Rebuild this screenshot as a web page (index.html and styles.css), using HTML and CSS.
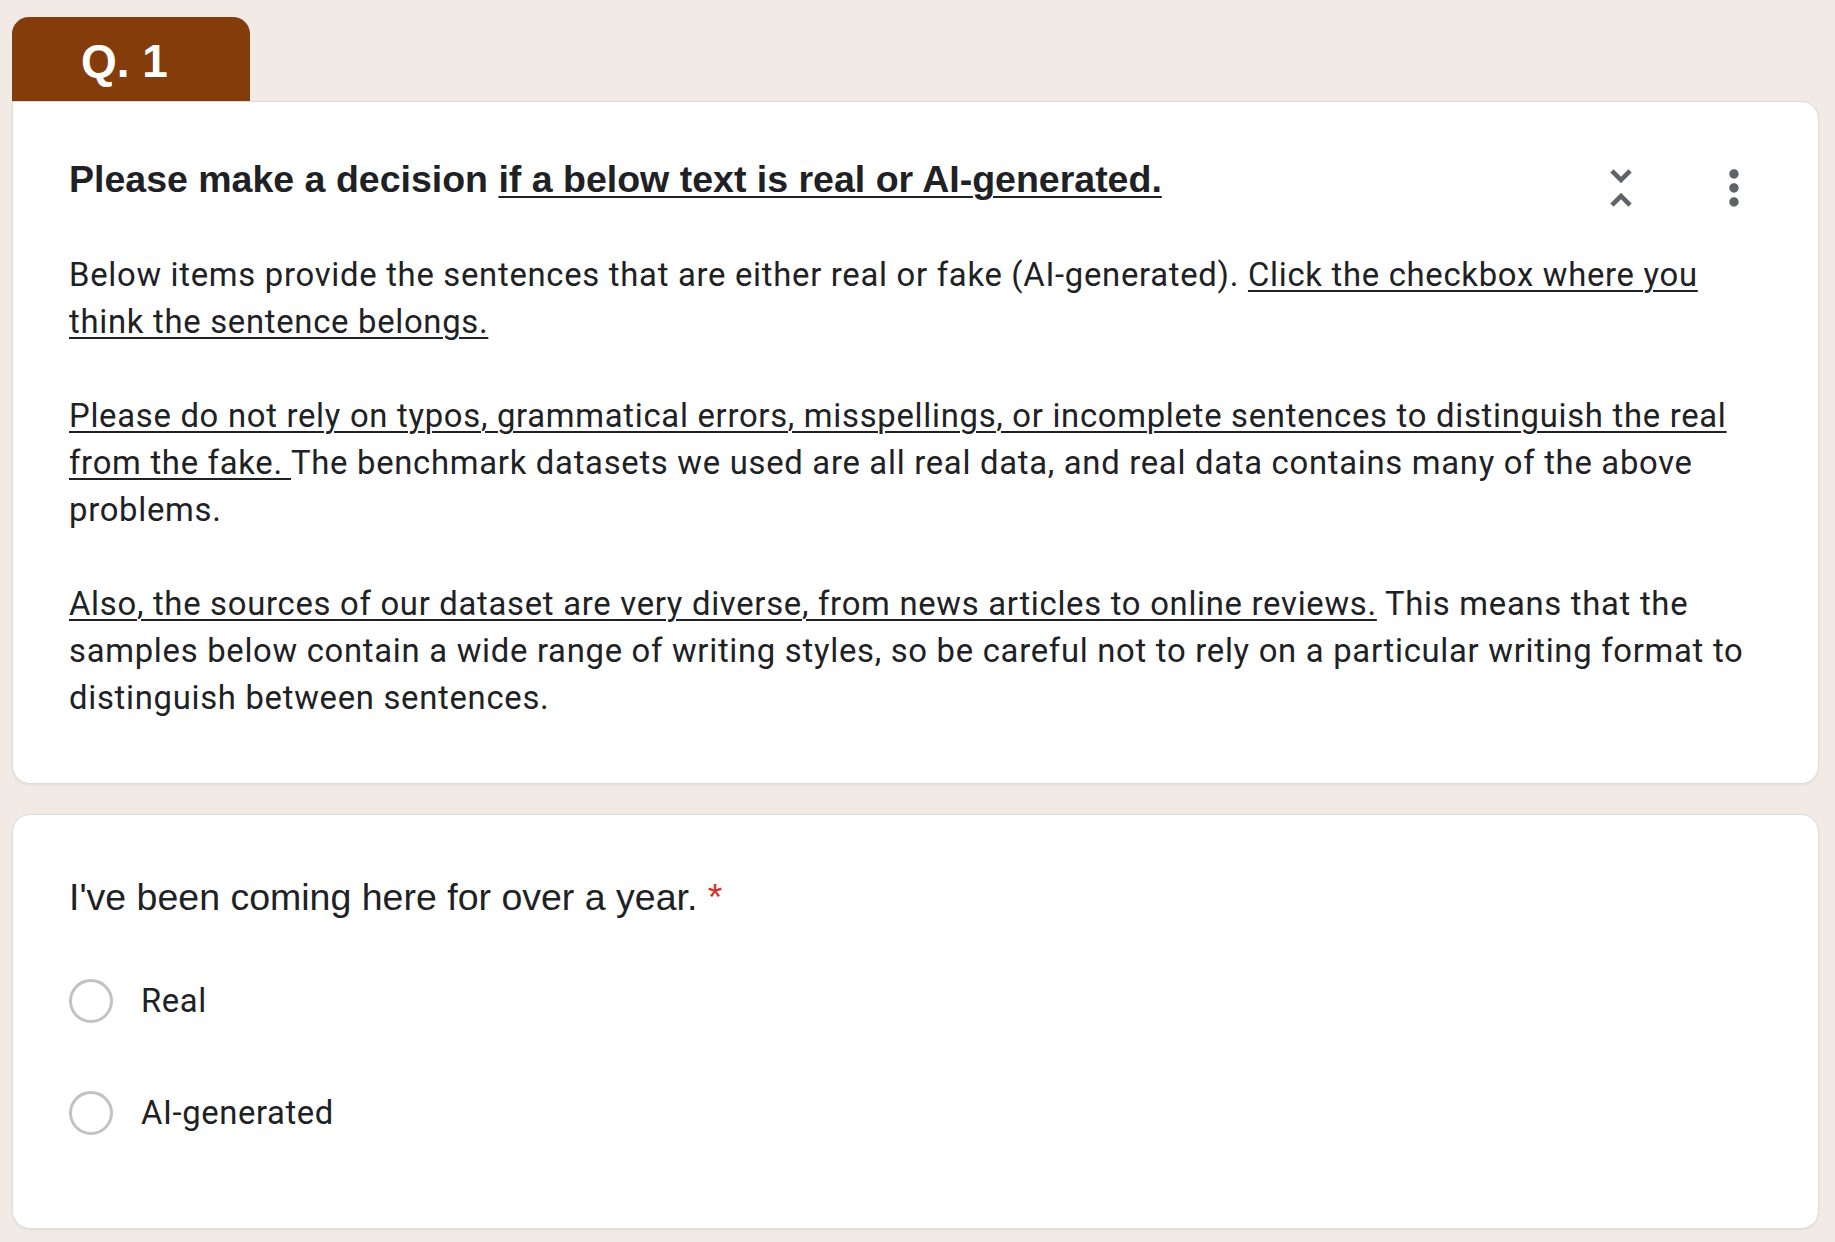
FILE: index.html
```html
<!DOCTYPE html>
<html lang="en">
<head>
    <meta charset="UTF-8">
    <meta name="viewport" content="width=device-width, initial-scale=1.0">
    <title>Q. 1</title>
    <link rel="stylesheet" href="styles.css">
</head>
<body>

    <div class="form">
        <div class="tab">Q. 1</div>

        <div class="card section">
            <div class="section-header">
                <h2 class="section-title">Please make a decision <u>if a below text is real or AI-generated.</u></h2>
                <button class="icon-btn" title="Collapse">
                    <svg viewBox="0 0 24 24" width="56" height="56"><path d="M7.41 18.59L8.83 20 12 16.83 15.17 20l1.41-1.41L12 14l-4.59 4.59zm9.18-13.18L15.17 4 12 7.17 8.83 4 7.41 5.41 12 10l4.59-4.59z"/></svg>
                </button>
                <button class="icon-btn" title="More options">
                    <svg viewBox="0 0 24 24" width="56" height="56"><path d="M12 8c1.1 0 2-.9 2-2s-.9-2-2-2-2 .9-2 2 .9 2 2 2zm0 2c-1.1 0-2 .9-2 2s.9 2 2 2 2-.9 2-2-.9-2-2-2zm0 6c-1.1 0-2 .9-2 2s.9 2 2 2 2-.9 2-2-.9-2-2-2z"/></svg>
                </button>
            </div>

            <div class="description">
                <p>Below items provide the sentences that are either real or fake (AI-generated). <u>Click the checkbox where you think the sentence belongs.</u></p>
                <p><u>Please do not rely on typos, grammatical errors, misspellings, or incomplete sentences to distinguish the real from the fake. </u>The benchmark datasets we used are all real data, and real data contains many of the above problems.</p>
                <p><u>Also, the sources of our dataset are very diverse, from news articles to online reviews.</u> This means that the samples below contain a wide range of writing styles, so be careful not to rely on a particular writing format to distinguish between sentences.</p>
            </div>
        </div>

        <div class="card question">
            <div class="question-title">I've been coming here for over a year. <span class="required">*</span></div>
            <label class="option">
                <span class="radio"></span>
                <span>Real</span>
            </label>
            <label class="option">
                <span class="radio"></span>
                <span>AI-generated</span>
            </label>
        </div>
    </div>

</body>
</html>
```

FILE: styles.css
```css
body {
    margin: 0;
    background-color: #f1eae5;
    font-family: Roboto, "Liberation Sans", Arial, sans-serif;
    color: #202124;
}

.form {
    width: 1807px;
    padding: 17px 0 16px 12px;
}

/* aba marrom acima do primeiro bloco */
.tab {
    width: 238px;
    height: 84px;
    box-sizing: border-box;
    padding: 7px 0 0 69px;
    background-color: #843c0b;
    border-radius: 17px 17px 0 0;
    color: white;
    font-family: "Liberation Sans", Arial, sans-serif;
    font-weight: bold;
    font-size: 46px;
    line-height: 74px;
}

.card {
    background-color: white;
    border: 1px solid #dadce0;
    border-radius: 18px;
    box-shadow: 0 1px 2px rgba(60, 64, 67, 0.08);
}

.section {
    border-top-left-radius: 0;
    padding: 56px 56px 61px 56px;
}

.section-header {
    display: flex;
    align-items: flex-start;
    gap: 57px;
    height: 43px;
}

.section-title {
    flex: 1;
    margin: 0;
    font-family: "Liberation Sans", Arial, sans-serif;
    font-size: 37.5px;
    font-weight: bold;
    line-height: 43px;
    color: #202124;
}

.icon-btn {
    width: 56px;
    height: 56px;
    margin-top: 2px;
    padding: 0;
    border: none;
    background: none;
    fill: #5f6368;
    cursor: pointer;
}

.icon-btn svg {
    display: block;
}

.description {
    margin-top: 51px;
    font-size: 32.8px;
    line-height: 47px;
    letter-spacing: 0.72px;
}

.description p {
    margin: 0 0 47px 0;
}

.description p:last-child {
    margin-bottom: 0;
}

u {
    text-decoration-thickness: 2px;
    text-underline-offset: 4px;
}

.question {
    margin-top: 30px;
    padding: 54px 56px 59px 56px;
}

.question-title {
    font-family: "Liberation Sans", Arial, sans-serif;
    font-size: 37.5px;
    line-height: 56px;
    margin-bottom: 20px;
}

.required {
    color: #d93025;
}

.option {
    display: flex;
    align-items: center;
    gap: 28px;
    height: 112px;
    font-size: 32.8px;
    line-height: 46.8px;
    letter-spacing: 0.6px;
    cursor: pointer;
}

.radio {
    width: 44px;
    height: 44px;
    box-sizing: border-box;
    border: 3.5px solid #c2c2c2;
    border-radius: 50%;
}
```
